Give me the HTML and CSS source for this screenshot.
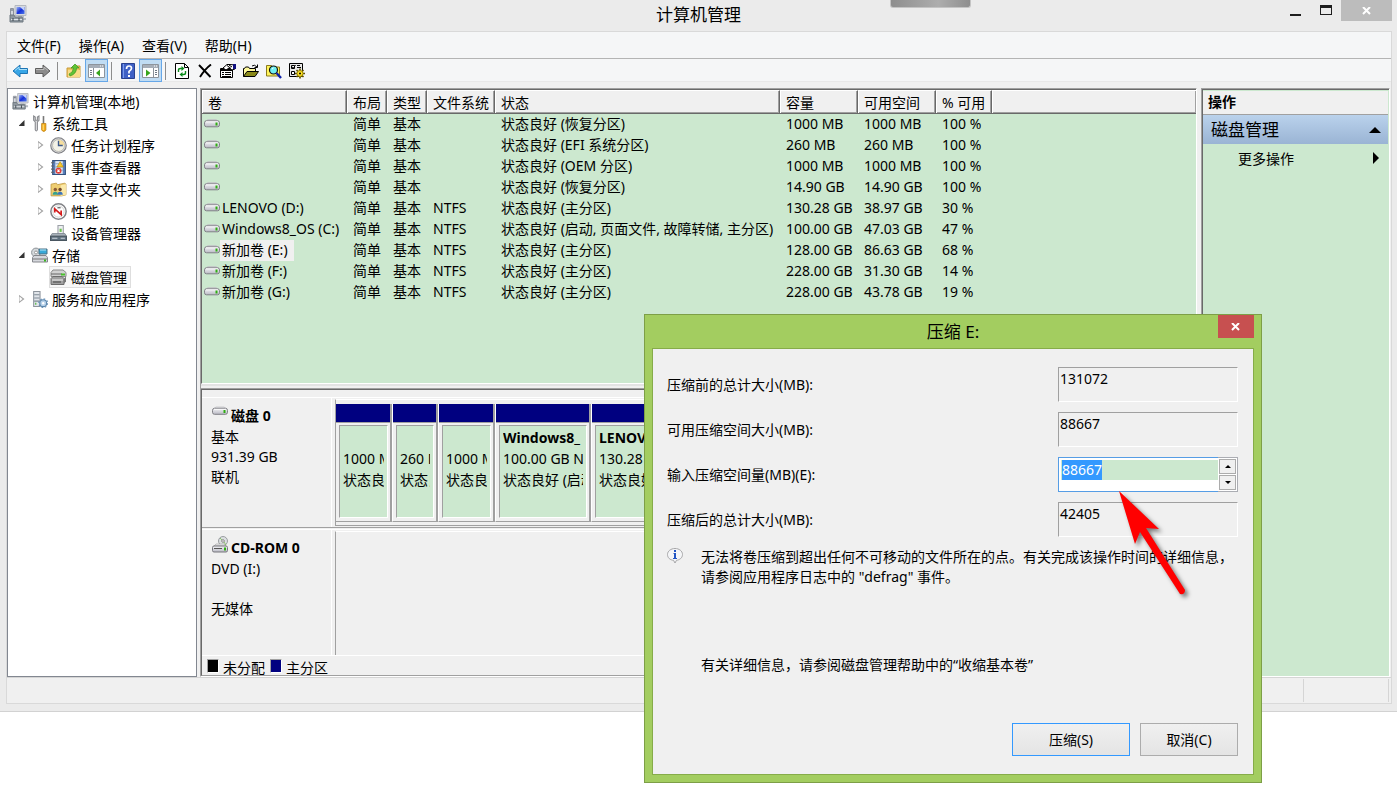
FILE: index.html
```html
<!DOCTYPE html>
<html lang="zh-CN">
<head>
<meta charset="utf-8">
<title>计算机管理</title>
<link rel="stylesheet" href="styles.css">
</head>
<body>
<svg class="defs" aria-hidden="true">
  <linearGradient id="g-screen" x1="0" y1="0" x2="1" y2="1"><stop offset="0" stop-color="#9db4f2"/><stop offset=".5" stop-color="#1630d8"/><stop offset="1" stop-color="#4f78ea"/></linearGradient>
  <linearGradient id="g-drive" x1="0" y1="0" x2="0" y2="1"><stop offset="0" stop-color="#f4f4f6"/><stop offset="1" stop-color="#b9b9c4"/></linearGradient>
  <symbol id="computer" viewBox="0 0 18 18">
    <path d="M6 .5h11v10H6z" fill="#d7dae0" stroke="#b4b8bf"/><path d="M7.500 2h8v7h-8z" fill="url(#g-screen)"/>
    <path d="M11 2l4.500 4V2z" fill="#c5d2f8"/><path d="M9 11h6v2h2v2H9z" fill="#b5bac2"/>
    <path d="M1.500 3.500h3v7h-3z" fill="#d4d8de" stroke="#8c929c"/><path d="M2 5h2" stroke="#5b6470"/>
    <path d="M1 10h4l1 2h7l1 2v3H1z" fill="#8e979f" stroke="#6f7880"/><path d="M2 14.500h11" stroke="#dfe4e8"/><path d="M4 13v3M10 13v3" stroke="#3d464e"/>
  </symbol>
  <symbol id="tools" viewBox="0 0 16 16">
    <path d="M2.500 1v4l1.500 1.500V14q1 2 2 0V6.500L7.500 5V1L6 2v3H4V2z" fill="#e5e5e7" stroke="#85878b"/>
    <path d="M11 1h1.500v7H11z" fill="#777"/><path d="M10 8h4v6q-2 3-4 0z" fill="#f4ad18" stroke="#b87b10" stroke-width=".7"/><path d="M11.500 9v5" stroke="#ffe083"/>
  </symbol>
  <symbol id="clock" viewBox="0 0 16 16">
    <circle cx="8" cy="8" r="7.300" fill="#d8d8da" stroke="#7d7e82"/><circle cx="8" cy="8" r="5.600" fill="#f4f2e6" stroke="#a5a59c" stroke-width=".6"/>
    <path d="M8 2.500A5.500 5.500 0 0 1 13.500 8H8z" fill="#f6de9d"/><path d="M8 3.500V8h4" fill="none" stroke="#3d5a8c" stroke-width="1.300"/>
  </symbol>
  <symbol id="event" viewBox="0 0 16 16">
    <path d="M2.500 1.500h12v13h-12z" fill="#5b80bc" stroke="#35527f"/><path d="M5 2h7v12H5z" fill="#dfe8f4"/><path d="M5 4.500h7M5 7.500h7M5 10.500h7" stroke="#8aa4c8"/>
    <path d="M1 3.500h3M1 6.500h3M1 9.500h3M1 12.500h3" stroke="#5d6168"/><path d="M9.500 2.500l3 5h-6z" fill="#f7c92a" stroke="#b98b0d" stroke-width=".6"/>
    <circle cx="8" cy="11" r="2.800" fill="#df3e38"/><path d="M7 10l2 2M9 10l-2 2" stroke="#fff"/>
  </symbol>
  <symbol id="share" viewBox="0 0 16 16">
    <path d="M1 3l5-1 1 1.500 7-1.500 1 1v10l-4 1-10 0z" fill="#efce72" stroke="#c19b45" stroke-width=".8"/><path d="M10 4l5-1v10l-5 1z" fill="#fae8a9"/>
    <circle cx="5" cy="8" r="1.600" fill="#8b5a36"/><circle cx="9.500" cy="8" r="1.600" fill="#70472c"/><path d="M2.500 13q0-3 2.500-3t2.500 3z" fill="#35a28e"/><path d="M7 13q0-3 2.500-3t2.500 3z" fill="#3b75bd"/>
  </symbol>
  <symbol id="perf" viewBox="0 0 16 16">
    <circle cx="8" cy="8" r="7.200" fill="#fff" stroke="#818286" stroke-width="1.400"/><circle cx="8" cy="8" r="5.300" fill="#fff" stroke="#bbb" stroke-width=".6"/><path d="M4.500 9V5.500l6 5.500V7" fill="none" stroke="#d41c1c" stroke-width="1.600"/><path d="M7 4.500h3" stroke="#444"/>
  </symbol>
  <symbol id="device" viewBox="0 0 16 16">
    <path d="M7.500.5h5v8h-5z" fill="#eef0f2" stroke="#9ba0a6"/><path d="M9 3.500h2v3H9z" fill="#6cc34e"/><path d="M2 8h12l1.500 2.500H.5z" fill="#a7b0b9" stroke="#7a838c" stroke-width=".7"/>
    <path d="M.5 10.500h15v4H.5z" fill="#60717f" stroke="#48555f"/><path d="M2 12.500h5M10 12.500h4" stroke="#cbd4dc"/>
  </symbol>
  <symbol id="storage" viewBox="0 0 17 16">
    <circle cx="5" cy="5" r="4.400" fill="#d5d9dc" stroke="#8d9297"/><circle cx="5" cy="5" r="1.500" fill="#fff" stroke="#999"/><path d="M8 1.500h8v5H8z" fill="#38a9d9" stroke="#4c7184"/><path d="M9 2.500h6" stroke="#b6e6f6"/>
    <path d="M1.500 10l1.500-2h12l1.500 2v4.500h-15z" fill="#d6d8dd" stroke="#85878c"/><path d="M2 11.500h14" stroke="#777"/><path d="M13 12h2v2h-2z" fill="#37b51c"/>
  </symbol>
  <symbol id="diskmgmt" viewBox="0 0 17 16">
    <path d="M1 3l2-2.500h10l3 2.500v4H1z" fill="#d2d2d2" stroke="#8a8a8a"/><path d="M1 4.500h11" stroke="#666"/><path d="M11 4h4v2h-4z" fill="#48c12a"/>
    <path d="M1 9l2-2h9l2 2v6H1z" fill="#a0a0a0" stroke="#6c6c6c"/><path d="M2 10.500h11" stroke="#eee"/><path d="M3 12.500h8" stroke="#444"/><path d="M14 9l2-2v5l-2 2z" fill="#777"/>
  </symbol>
  <symbol id="services" viewBox="0 0 16 16">
    <path d="M2.500.5h6v14h-6z" fill="#e1e5ea" stroke="#8d949c"/><path d="M3 3.500h5M3 6.500h5M3 9.500h5" stroke="#7f8a95"/><path d="M4 11h1v2H4z" fill="#43b32d"/>
    <circle cx="11.500" cy="11.500" r="3.200" fill="#b6d1ea" stroke="#5c86ac"/><circle cx="11.500" cy="11.500" r="4.100" fill="none" stroke="#6b93b8" stroke-width="1.200" stroke-dasharray="1.500 1.700"/><circle cx="11.500" cy="11.500" r="1.100" fill="#fff"/>
  </symbol>
  <symbol id="drive" viewBox="0 0 16 9">
    <path d="M2 2L4 .5h8L14 2z" fill="#e4e4e8" stroke="#b5b5ba" stroke-width=".6"/><rect x=".5" y="1.800" width="15" height="6" rx="2" fill="url(#g-drive)" stroke="#808086"/><path d="M2 2.800h12" stroke="#fff" stroke-width=".8"/><path d="M11.500 3.500h2v3h-2z" fill="#2fae12"/>
  </symbol>
  <symbol id="cdrom" viewBox="0 0 16 17">
    <circle cx="11" cy="5" r="4.500" fill="#dcdfe1" stroke="#999da0"/><circle cx="11" cy="5" r="1.300" fill="#fff" stroke="#888"/><path d="M8 2l2 2M12 6l2 3" stroke="#8bc46c"/>
    <path d="M2 10l2-2h8l2 2z" fill="#ececee" stroke="#aaa" stroke-width=".7"/><rect x=".5" y="10" width="15" height="6" rx="1.500" fill="url(#g-drive)" stroke="#77777d"/><path d="M2 12.500h8" stroke="#555"/><path d="M12 11.500h2v3h-2z" fill="#2fae12"/>
  </symbol>
</svg>

<div class="window">
  <header class="titlebar">
    <svg class="app-icon"><use href="#computer"/></svg>
    <h1>计算机管理</h1>
    <div class="caption">
      <button class="cap" aria-label="最小化"><svg width="12" height="12"><path d="M0 9h11v2H0z" fill="#1e1e1e"/></svg></button>
      <button class="cap" aria-label="最大化"><svg width="12" height="12"><path d="M0 0h12v10H0zM1 3v6h10V3z" fill="#1e1e1e" fill-rule="evenodd"/></svg></button>
      <button class="cap cap-close" aria-label="关闭"><svg width="10" height="8"><path d="M1 0l7 7M8 0L1 7" stroke="#fff" stroke-width="2"/></svg></button>
    </div>
    <div class="tab-handle"></div>
  </header>

  <div class="frame">
    <nav class="menubar">
      <button>文件(F)</button><button>操作(A)</button><button>查看(V)</button><button>帮助(H)</button>
    </nav>
    <div class="toolbar">
      <button aria-label="后退"><svg width="16" height="16"><path d="M1 8l7-6v3.500h7.500v5H8V14z" fill="#38a6e6" stroke="#1d74b4"/><path d="M3 7.500L7 4v2.500h8" fill="none" stroke="#a8e0fa"/></svg></button>
      <button aria-label="前进"><svg width="16" height="16"><path d="M15 8L8 2v3.500H.5v5H8V14z" fill="#8b8b8b" stroke="#5e5e5e"/><path d="M1 6.500h8V4l4 3.500" fill="none" stroke="#bcbcbc"/></svg></button>
      <span class="sep"></span>
      <button aria-label="上移"><svg width="16" height="16"><path d="M1 5h5l1-2h7v11H1z" fill="#edc660" stroke="#c99a39"/><path d="M2 7h12v7H2z" fill="#f9dc88"/><path d="M3 11q4-1 4.500-6H5l4-4 4 4h-2.500q0 6-6.500 8z" fill="#5fc436" stroke="#3b9420" stroke-width=".7"/></svg></button>
      <button class="on" aria-label="显示控制台树"><svg width="17" height="14"><path d="M.5.5h16v13H.5z" fill="#fff" stroke="#8d949c"/><path d="M1 1h15v3H1z" fill="#a6aeb8"/><path d="M12 2h1M14 2h1" stroke="#fff"/><path d="M5.500 4v10" stroke="#89919a"/><path d="M2 6.500h2M2 8.500h2M2 10.500h2" stroke="#6d7782"/><path d="M12 5.500v7L8 9z" fill="#37a51d"/></svg></button>
      <span class="sep"></span>
      <button aria-label="帮助"><svg width="14" height="16"><path d="M.5.5h13v15H.5z" fill="#3e60c5" stroke="#29418f"/><path d="M2.500 1v14" stroke="#7b9bea"/><path d="M5.500 6q0-3 2.500-3t2.500 2.300Q10.500 7 8 8.500V10.500" fill="none" stroke="#fff" stroke-width="1.700"/><path d="M7 12h2v2H7z" fill="#fff"/></svg></button>
      <button class="on" aria-label="显示操作窗格"><svg width="17" height="14"><path d="M.5.5h16v13H.5z" fill="#fff" stroke="#8d949c"/><path d="M1 1h15v3H1z" fill="#a6aeb8"/><path d="M12 2h1M14 2h1" stroke="#fff"/><path d="M11.500 4v10" stroke="#89919a"/><path d="M13 6.500h2M13 8.500h2M13 10.500h2" stroke="#6d7782"/><path d="M4 5.500v7L8.500 9z" fill="#37a51d"/></svg></button>
      <span class="sep"></span>
      <button aria-label="刷新"><svg width="14" height="16"><path d="M.5.5h9l4 4v11H.5z" fill="#fff" stroke="#000"/><path d="M9.500.5v4h4" fill="none" stroke="#000"/><path d="M3.500 9V7q0-1.500 2-1.500h1.500M10.500 8v2q0 1.500-2 1.500H7" fill="none" stroke="#0a8a1a" stroke-width="1.400"/><path d="M6.500 3v5L9.500 5.500zM7.500 9v5L4.500 11.500z" fill="#0a8a1a"/></svg></button>
      <button aria-label="删除"><svg width="14" height="14"><path d="M1 1l11.500 12M13 .5Q7 5 2 13" fill="none" stroke="#000" stroke-width="1.900"/></svg></button>
      <button aria-label="属性"><svg width="16" height="16"><path d="M.5 5.500h12v9H.5z" fill="#fff" stroke="#000"/><path d="M1 7h11" stroke="#000" stroke-width="2"/><path d="M2 9.500h2M5 9.500h6M2 11.500h2M5 11.500h6M2 13.500h9" stroke="#000"/><path d="M3 5l4-3.500h3L15 2v4l-3 1-3-2-3 2z" fill="#fff" stroke="#000"/><path d="M7 2.500l4 3M9 2l3 2" stroke="#000"/><path d="M13 1h3v5h-3z" fill="#101080"/></svg></button>
      <button aria-label="打开"><svg width="16" height="14"><path d="M.5 12.500v-8h1l1-1.500h3l1 1.500h6V7" fill="#fdf89b" stroke="#000"/><path d="M.5 12.500L4 7.500h11.500l-3.500 5z" fill="#8a8a19" stroke="#000"/><path d="M9 2q2.500-2 5 1M14.500.5V3.500H11.500" fill="none" stroke="#000"/></svg></button>
      <button aria-label="查找"><svg width="16" height="16"><path d="M.5 2.500h5l1 1.500h7v9H.5z" fill="#fff35a" stroke="#8b7b1c"/><circle cx="7.500" cy="7" r="4" fill="#6ff0f2" stroke="#111" stroke-width="1.200"/><path d="M10.500 10l4.500 5" stroke="#0b1fa8" stroke-width="2.400"/><path d="M6 6l1.500-1" stroke="#fff"/></svg></button>
      <button aria-label="设置"><svg width="16" height="16"><path d="M.5.5h13v13H.5z" fill="#e8e8e8" stroke="#000"/><path d="M2.500 2.500h3v3h-3zM2.500 8.500h3v3h-3z" fill="#fff" stroke="#000"/><path d="M3 4l1.500 1L6.500 2M8 4.500h4M8 2.500h3" fill="none" stroke="#000"/><path d="M11 5.500v10M6 10.500h10M7.500 7l7 7M14.500 7l-7 7" stroke="#5a4c00" stroke-width="1.600"/><circle cx="11" cy="10.500" r="3" fill="#ffe326" stroke="#a08c00"/><circle cx="11" cy="10.500" r="1" fill="#000"/></svg></button>
    </div>

    <main class="panes">
      <aside class="tree">
        <ul>
          <li><div class="node root"><svg class="ico"><use href="#computer"/></svg><span>计算机管理(本地)</span></div>
            <ul>
              <li><div class="node l1"><i class="tw open"></i><svg class="ico"><use href="#tools"/></svg><span>系统工具</span></div>
                <ul>
                  <li><div class="node l2"><i class="tw shut"></i><svg class="ico"><use href="#clock"/></svg><span>任务计划程序</span></div></li>
                  <li><div class="node l2"><i class="tw shut"></i><svg class="ico"><use href="#event"/></svg><span>事件查看器</span></div></li>
                  <li><div class="node l2"><i class="tw shut"></i><svg class="ico"><use href="#share"/></svg><span>共享文件夹</span></div></li>
                  <li><div class="node l2"><i class="tw shut"></i><svg class="ico"><use href="#perf"/></svg><span>性能</span></div></li>
                  <li><div class="node l2"><i class="tw"></i><svg class="ico"><use href="#device"/></svg><span>设备管理器</span></div></li>
                </ul></li>
              <li><div class="node l1"><i class="tw open"></i><svg class="ico"><use href="#storage"/></svg><span>存储</span></div>
                <ul>
                  <li><div class="node l2"><i class="tw"></i><div class="picked"><svg class="ico"><use href="#diskmgmt"/></svg><span>磁盘管理</span></div></div></li>
                </ul></li>
              <li><div class="node l1"><i class="tw shut"></i><svg class="ico"><use href="#services"/></svg><span>服务和应用程序</span></div></li>
            </ul></li>
        </ul>
      </aside>

      <section class="center">
        <div class="volumes">
          <table>
            <colgroup><col class="c-vol"><col class="c-s"><col class="c-s"><col class="c-fs"><col class="c-state"><col class="c-size"><col class="c-size"><col class="c-pct"><col></colgroup>
            <thead><tr><th>卷</th><th>布局</th><th>类型</th><th>文件系统</th><th>状态</th><th>容量</th><th>可用空间</th><th>% 可用</th><th class="rest"></th></tr></thead>
            <tbody>
              <tr><td><div class="vol"><svg><use href="#drive"/></svg></div></td><td>简单</td><td>基本</td><td></td><td>状态良好 (恢复分区)</td><td>1000 MB</td><td>1000 MB</td><td>100 %</td><td></td></tr>
              <tr><td><div class="vol"><svg><use href="#drive"/></svg></div></td><td>简单</td><td>基本</td><td></td><td>状态良好 (EFI 系统分区)</td><td>260 MB</td><td>260 MB</td><td>100 %</td><td></td></tr>
              <tr><td><div class="vol"><svg><use href="#drive"/></svg></div></td><td>简单</td><td>基本</td><td></td><td>状态良好 (OEM 分区)</td><td>1000 MB</td><td>1000 MB</td><td>100 %</td><td></td></tr>
              <tr><td><div class="vol"><svg><use href="#drive"/></svg></div></td><td>简单</td><td>基本</td><td></td><td>状态良好 (恢复分区)</td><td>14.90 GB</td><td>14.90 GB</td><td>100 %</td><td></td></tr>
              <tr><td><div class="vol"><svg><use href="#drive"/></svg><span>LENOVO (D:)</span></div></td><td>简单</td><td>基本</td><td>NTFS</td><td>状态良好 (主分区)</td><td>130.28 GB</td><td>38.97 GB</td><td>30 %</td><td></td></tr>
              <tr><td><div class="vol"><svg><use href="#drive"/></svg><span>Windows8_OS (C:)</span></div></td><td>简单</td><td>基本</td><td>NTFS</td><td>状态良好 (启动, 页面文件, 故障转储, 主分区)</td><td>100.00 GB</td><td>47.03 GB</td><td>47 %</td><td></td></tr>
              <tr><td><div class="vol"><svg><use href="#drive"/></svg><span class="hot">新加卷 (E:)</span></div></td><td>简单</td><td>基本</td><td>NTFS</td><td>状态良好 (主分区)</td><td>128.00 GB</td><td>86.63 GB</td><td>68 %</td><td></td></tr>
              <tr><td><div class="vol"><svg><use href="#drive"/></svg><span>新加卷 (F:)</span></div></td><td>简单</td><td>基本</td><td>NTFS</td><td>状态良好 (主分区)</td><td>228.00 GB</td><td>31.30 GB</td><td>14 %</td><td></td></tr>
              <tr><td><div class="vol"><svg><use href="#drive"/></svg><span>新加卷 (G:)</span></div></td><td>简单</td><td>基本</td><td>NTFS</td><td>状态良好 (主分区)</td><td>228.00 GB</td><td>43.78 GB</td><td>19 %</td><td></td></tr>
            </tbody>
          </table>
        </div>
        <div class="splitter"></div>
        <div class="disks">
          <div class="disk">
            <div class="disk-label">
              <div class="disk-name"><svg class="hdd"><use href="#drive"/></svg><b>磁盘 0</b></div>
              <p>基本</p><p>931.39 GB</p><p>联机</p>
            </div>
            <div class="graph parts">
              <div class="part w57"><div class="bar"></div><div class="box"><p></p><p>1000 MB</p><p>状态良好</p></div></div>
              <div class="part w46"><div class="bar"></div><div class="box"><p></p><p>260 MB</p><p>状态良好</p></div></div>
              <div class="part w57"><div class="bar"></div><div class="box"><p></p><p>1000 MB</p><p>状态良好</p></div></div>
              <div class="part w96"><div class="bar"></div><div class="box"><p><b>Windows8_</b></p><p>100.00 GB NTFS</p><p>状态良好 (启动)</p></div></div>
              <div class="part grow"><div class="bar"></div><div class="box"><p><b>LENOVO</b></p><p>130.28 GB</p><p>状态良好</p></div></div>
            </div>
          </div>
          <div class="disk second">
            <div class="disk-label">
              <div class="disk-name"><svg class="cd"><use href="#cdrom"/></svg><b>CD-ROM 0</b></div>
              <p>DVD (I:)</p><p></p><p>无媒体</p>
            </div>
            <div class="graph"></div>
          </div>
          <div class="legend"><i class="sw black"></i><span>未分配</span><i class="sw navy"></i><span>主分区</span></div>
        </div>
      </section>

      <aside class="actions">
        <h2>操作</h2>
        <button class="group"><span>磁盘管理</span><svg width="12" height="6"><path d="M6 0l6 6H0z"/></svg></button>
        <button class="more"><span>更多操作</span><svg width="6" height="12"><path d="M0 0l6 6-6 6z"/></svg></button>
      </aside>
    </main>
    <footer class="status"><span></span><span></span></footer>
  </div>
</div>

<div class="dialog" role="dialog" aria-labelledby="dlg-title">
  <div class="dlg-title"><h2 id="dlg-title">压缩 E:</h2><button class="dlg-close" aria-label="关闭"><svg width="10" height="8"><path d="M1 0l7 7M8 0L1 7" stroke="#fff" stroke-width="2"/></svg></button></div>
  <form class="dlg-body">
    <div class="field"><label for="before">压缩前的总计大小(MB):</label><output id="before">131072</output></div>
    <div class="field"><label for="avail">可用压缩空间大小(MB):</label><output id="avail">88667</output></div>
    <div class="field"><label for="amount">输入压缩空间量(MB)(E):</label>
      <div class="spin"><div class="entry"><input id="amount" type="text" value="88667" autofocus></div>
        <div class="steps"><button type="button" aria-label="增加"><svg width="6" height="3"><path d="M3 0l3 3H0z"/></svg></button><button type="button" aria-label="减少"><svg width="6" height="3"><path d="M0 0h6L3 3z"/></svg></button></div></div></div>
    <div class="field"><label for="after">压缩后的总计大小(MB):</label><output id="after">42405</output></div>
    <div class="info">
      <svg width="16" height="17"><path d="M8 1.500c4.200 0 7.500 2.600 7.500 6S12.500 13 9.500 13.300L8 16l-1.500-2.700C3 13 .5 10.800.5 7.500S3.800 1.500 8 1.500z" fill="#f4f5f7" stroke="#a6a6a8"/><path d="M7 3h2v2H7zM6.500 6h2.500v5h1v1h-4v-1h1V7h-.5z" fill="#2255c4"/></svg>
      <p>无法将卷压缩到超出任何不可移动的文件所在的点。有关完成该操作时间的详细信息，请参阅应用程序日志中的 "defrag" 事件。</p>
    </div>
    <p class="help">有关详细信息，请参阅磁盘管理帮助中的“收缩基本卷”</p>
    <div class="buttons"><button type="button" class="ok">压缩(S)</button><button type="button" class="cancel">取消(C)</button></div>
  </form>
  <svg class="arrow" width="84" height="120" viewBox="0 0 84 120"><path d="M9 7L49 45L36 44L75 106Q75 111 70 110L30 48L25 60Z" fill="#f00"/></svg>
</div>
<script src="main.js"></script>
</body>
</html>
```
FILE: styles.css
```css
* { box-sizing: border-box; }
body { margin: 0; height: 100vh; background: #fff; color: #000; overflow: hidden; position: relative;
  font: 14px/21px "Noto Sans", "Noto Sans CJK SC", sans-serif; }
h1, h2, p, ul { margin: 0; padding: 0; font-weight: normal; }
ul { list-style: none; }
button { font: inherit; color: inherit; margin: 0; padding: 0; border: 0; background: none; }
svg { display: block; flex: none; }
.defs { position: absolute; width: 0; height: 0; }

.window { height: calc(100vh - 74px); display: flex; flex-direction: column; background: #ebebeb; border-bottom: 1px solid #d2d2d2; }
.titlebar { display: grid; grid-template-columns: 1fr auto 1fr; height: 31px; flex: none; position: relative; }
.app-icon { width: 18px; height: 18px; margin: 5px 0 0 9px; }
h1 { font-size: 17px; line-height: 29px; }
.caption { display: flex; justify-content: flex-end; padding-right: 5px; }
.cap { width: 30px; height: 21px; display: flex; align-items: center; justify-content: center; }
.cap-close { width: 51px; background: #bcbcbc; }
.tab-handle { position: absolute; right: 426px; top: 0; width: 81px; height: 8px; border: 1px solid #c4c4c4; border-top: 0; border-radius: 0 0 3px 3px; background: linear-gradient(90deg, #8e8e8e, #adadad 60%, #8e8e8e); }

.frame { flex: 1; min-height: 0; margin: 0 5px 7px 6px; border: 1px solid #d9d9d9; background: #f0f0f0; display: flex; flex-direction: column; }
.menubar { height: 27px; flex: none; display: flex; padding-left: 1px; background: #f5f6f7; border-bottom: 1px solid #b4b4b4; }
.menubar button { padding: 0 9px; }
.toolbar { height: 23px; flex: none; display: flex; padding-left: 1px; background: #f5f6f7; border-bottom: 1px solid #e8e8e8; }
.toolbar button { width: 23px; height: 23px; display: flex; align-items: center; justify-content: center; }
.toolbar .on { background: #c0dcf3; border: 1px solid #66a7e8; }
.sep { width: 8px; padding: 3px 0; }
.sep::before { content: ""; display: block; width: 1px; height: 18px; margin-left: 3px; background: #8d8d8d; }

.panes { flex: 1; min-height: 0; display: flex; padding: 6px 1px 0 0; }
.tree { width: 190px; border: 1px solid #828790; background: #fff; padding-top: 1px; flex: none; }
.node { display: flex; align-items: center; height: 22px; }
.node span { padding-left: 4px; white-space: nowrap; }
.ico { width: 17px; height: 17px; }
.root { padding-left: 4px; }
.l1 { padding-left: 7px; }
.l2 { padding-left: 26px; }
.tw { width: 16px; height: 22px; display: flex; align-items: center; justify-content: center; }
.l2 .tw { padding-right: 3px; }
.l1 .tw { padding-right: 3px; }
.shut::before { content: ""; width: 6px; height: 9px; background: #a6a6a6; clip-path: polygon(0 0, 100% 50%, 0 100%, 0 0, 1px 2px, 1px 7px, 4px 50%, 1px 2px); }
.open::before { content: ""; width: 6px; height: 6px; background: #333; clip-path: polygon(100% 0, 100% 100%, 0 100%); }
.picked { display: flex; align-items: center; height: 22px; margin-left: -1px; padding-right: 3px; background: #f7f7f7; border: 1px solid #dedede; }

.center { flex: 1; min-width: 0; margin: 0 4px 0 3px; display: flex; flex-direction: column; border: 1px solid #a0a0a0; border-right-color: #fff; border-bottom-color: #fff; }
.volumes { flex: 1; min-height: 0; overflow: hidden; background: #cce8cf; border-left: 1px solid #696969; border-top: 1px solid #696969; border-bottom: 1px solid #fff; }
table { border-collapse: separate; border-spacing: 0; table-layout: fixed; width: 100%; }
th, td { padding: 0 0 0 6px; text-align: left; font-weight: normal; white-space: nowrap; height: 21px; line-height: 19px; vertical-align: top; }
th { height: 24px; background: #f0f0f0; border-top: 1px solid #fff; border-right: 1px solid #696969; border-bottom: 1px solid #696969; box-shadow: inset 1px 0 #fff, inset -1px -1px #a0a0a0; padding-top: 2px; }
th.rest { border-right: 0; }
td:first-child { padding-left: 2px; }
.c-vol { width: 145px; } .c-s { width: 40px; } .c-fs { width: 68px; } .c-state { width: 285px; } .c-size { width: 78px; } .c-pct { width: 56px; }
.vol { display: flex; height: 21px; }
.vol svg { width: 16px; height: 9px; margin-top: 5px; }
.vol span { padding: 0 2px; }
.vol .hot { background: #f0f0f0; padding-right: 6px; }
.splitter { height: 5px; flex: none; background: #f0f0f0; border-top: 2px solid #e3e3e3; border-bottom: 1px solid #a0a0a0; }
.disks { height: 287px; flex: none; display: flex; flex-direction: column; padding-top: 7px; border-left: 1px solid #696969; border-top: 1px solid #696969; border-bottom: 1px solid #a0a0a0; overflow: hidden; }
.disk { display: flex; height: 131px; flex: none; border-top: 1px solid #fff; border-bottom: 1px solid #a0a0a0; }
.second { flex: 1; height: auto; border-bottom: 0; margin-top: 1px; }
.disk-label { width: 130px; flex: none; border-right: 1px solid #fff; padding: 8px 0 0 9px; line-height: 20px; }
.disk-label p { min-height: 20px; }
.disk-name { display: flex; height: 21px; gap: 3px; padding-left: 1px; }
.hdd { width: 16px; height: 10px; }
.cd { width: 16px; height: 17px; margin-top: -2px; }
.graph { flex: 1; min-width: 0; margin: 1px 0 0 3px; border-left: 1px solid #a0a0a0; border-top: 1px solid #fff; }
.parts { display: flex; padding-top: 4px; margin-bottom: 1px; border-bottom: 1px solid #a0a0a0; }
.part { display: flex; flex-direction: column; flex: none; height: 118px; border-right: 1px solid #fff; border-bottom: 1px solid #a0a0a0; box-shadow: inset -2px 0 #a0a0a0; }
.w57 { width: 57px; } .w46 { width: 46px; } .w96 { width: 96px; } .grow { flex: 1; }
.bar { height: 19px; margin-right: 1px; background: #000080; border-bottom: 1px solid #a0a0a0; border-right: 1px solid #a0a0a0; }
.box { flex: 1; margin: 2px 4px 3px 3px; padding: 1px 3px 0 3px; background: #cce8cf; border: 1px solid; border-color: #a0a0a0 #fff #fff #a0a0a0; overflow: hidden; }
.box p { height: 21px; overflow: hidden; white-space: nowrap; }
.legend { display: flex; align-items: center; height: 20px; flex: none; border-top: 1px solid #fff; padding-left: 5px; }
.legend span { padding: 3px 5px 0 4px; }
.sw { width: 12px; height: 14px; border: 1px solid #a0a0a0; border-right-color: #fff; border-bottom-color: #fff; }
.black { background: #000; } .navy { background: #000080; }

.actions { width: 189px; flex: none; background: #cce8cf; border: 1px solid #a0a0a0; border-right-color: #fff; border-bottom-color: #fff; box-shadow: inset 1px 1px #696969; padding: 2px 1px 0 1px; }
.actions h2 { height: 24px; padding: 0 0 0 5px; background: #f0f0f0; border-bottom: 1px solid #a0a0a0; font-size: 14px; font-weight: bold; }
.group { width: 100%; height: 29px; display: flex; align-items: center; justify-content: space-between; padding: 0 7px 0 8px; background: linear-gradient(#bad2ec, #9ab4d4); font-size: 17px; }
.more { width: 100%; height: 28px; display: flex; align-items: center; justify-content: space-between; padding: 0 9px 0 35px; }
.status { height: 26px; flex: none; display: flex; justify-content: flex-end; padding: 1px 2px 1px 0; border-top: 1px solid #d5d5d5; }
.status span { width: 85px; border-right: 1px solid #d5d5d5; }

.dialog { position: absolute; right: 135px; top: 314px; width: 618px; padding: 0 7px 7px; background: #a3cd60; border: 1px solid #7d9f47; }
.dlg-title { height: 33px; display: flex; justify-content: center; }
.dlg-title h2 { font-size: 17px; line-height: 34px; }
.dlg-close { position: absolute; right: 7px; top: 0; width: 36px; height: 23px; display: flex; align-items: center; justify-content: center; background: #c75050; }
.dlg-body { height: 427px; background: #f0f0f0; border: 1px solid #86ac49; padding: 18px 15px 18px 14px; }
.field { display: flex; justify-content: space-between; align-items: center; height: 35px; margin-bottom: 10px; }
output, .spin { width: 180px; height: 35px; border: 1px solid; border-color: #a0a0a0 #fff #fff #a0a0a0; padding-left: 1px; }
.spin { display: flex; background: #fff; border-color: #abadb3; padding: 0; }
.entry { flex: 1; margin: -1px 0 -1px -1px; padding: 2px 0 0 2px; border: 1px solid #569de5; border-right: 0; }
.entry input { display: block; width: 100%; height: 20px; padding: 0 0 0 1px; border: 0; outline: 0; background: #cce8cf; font: inherit; line-height: 20px; }
.entry input::selection { background: #39f; color: #fff; }
.steps { width: 19px; padding: 1px; display: flex; flex-direction: column; gap: 1px; }
.steps button { flex: 1; width: 17px; display: flex; align-items: center; justify-content: center; background: #f0f0f0; border: 1px solid #acacac; }
.info { display: flex; gap: 18px; min-height: 42px; }
.info p { line-height: 20px; margin-right: -1px; }
.help { margin: 65px 0 0 34px; }
.buttons { display: flex; justify-content: flex-end; gap: 10px; margin-top: 48px; }
.buttons button { height: 33px; border: 1px solid #acacac; background: linear-gradient(#f0f0f0, #e4e4e4); }
.buttons .ok { width: 118px; border-color: #39f; }
.buttons .cancel { width: 98px; }
.arrow { position: absolute; left: 465px; top: 169px; filter: drop-shadow(3px 3px 2px rgba(0, 0, 0, .5)); pointer-events: none; }
```
FILE: main.js
```js
const amount = document.getElementById('amount');
amount.focus();
amount.select();
```
